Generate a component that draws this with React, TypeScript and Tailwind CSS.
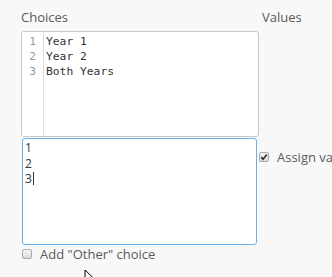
import React from 'react';

const sans = { fontFamily: '"Open Sans", "Noto Sans", sans-serif' };

function Checkbox({ checked }: { checked?: boolean }) {
  return (
    <span className="flex h-[10px] w-[10px] shrink-0 items-center justify-center rounded-[2px] border border-[#a9a9a9] bg-[linear-gradient(#f6f6f6,#dadada)]">
      {checked && (
        <svg width="8" height="8" viewBox="0 0 8 8">
          <path d="M1.2 4.2 L3.1 6.2 L6.8 1.4" fill="none" stroke="#333" strokeWidth="1.7" />
        </svg>
      )}
    </span>
  );
}

export default function App() {
  const choices = ['Year 1', 'Year 2', 'Both Years'];
  const values = ['1', '2', '3'];

  return (
    <div className="relative h-[277px] w-[332px] overflow-hidden bg-[#f8f8f8] text-[#5a5a5a]" style={sans}>
      <div className="grid grid-cols-[238px_1fr] pl-[21px] pt-[8px]">
        <div className="text-[13px] leading-[18px]">Choices</div>
        <div className="pl-[3px] text-[13px] leading-[18px]">Values</div>

        <div className="mt-[5px] flex h-[106px] overflow-hidden rounded-[3px] border border-[#c8c8c8] bg-white">
          <div className="w-[22px] border-r border-[#dddddd] bg-white pt-[2px] pr-[7px] text-right font-['DejaVu_Sans_Mono'] text-[11.3px] leading-[15px] text-[#999]">
            {choices.map((_, i) => (
              <div key={i}>{i + 1}</div>
            ))}
          </div>
          <div className="pl-[2px] pt-[2px] font-['DejaVu_Sans_Mono'] text-[11.3px] leading-[15px] text-[#333]">
            {choices.map((c) => (
              <div key={c}>{c}</div>
            ))}
          </div>
        </div>
        <div />

        <div className="ml-[1px] mr-[2px] mt-[1px] h-[107px] rounded-[3px] border border-[#66afe9] bg-white pl-[2px] pt-[1px] text-[12px] leading-[15.5px] text-[#333]">
          {values.map((v, i) => (
            <div key={v} className="flex items-center">
              {v}
              {i === values.length - 1 && <span className="ml-[1px] inline-block h-[13px] w-px bg-[#333]" />}
            </div>
          ))}
        </div>
        <div className="flex items-start gap-[8px] pt-[12px] text-[13px] leading-[16px] whitespace-nowrap">
          <span className="mt-[3px]">
            <Checkbox checked />
          </span>
          <span>Assign values</span>
        </div>

        <div className="mt-[1px] flex items-center gap-[8px] pl-[1px] text-[13px] leading-[16px]">
          <Checkbox />
          <span>Add "Other" choice</span>
        </div>
      </div>

      <svg className="absolute left-[84px] top-[269px]" width="12" height="18" viewBox="0 0 12 18">
        <path d="M1 1 L1 15 L4.5 11.5 L7 17 L9 16 L6.6 10.6 L11 10.6 Z" fill="#fff" stroke="#000" strokeWidth="1" />
      </svg>
    </div>
  );
}
